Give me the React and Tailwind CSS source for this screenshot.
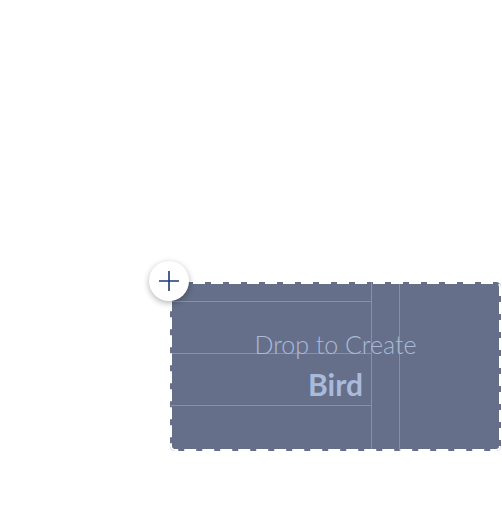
import React from 'react';

export default function App() {
  return (
    <div className="w-[502px] h-[512px] bg-white overflow-hidden" style={{ fontFamily: 'Lato, "Noto Sans", sans-serif' }}>
      <div className="pt-[282px] pl-[170px]">
        {/* drop target */}
        <div className="relative w-[331px] h-[169px] rounded-[5px] bg-[#656f89]">
          <div className="flex h-full">
            <div className="flex flex-col w-[201px]">
              <div className="h-[20px] border-b border-[#8590aa]" />
              <div className="h-[52px] border-b border-[#8590aa]" />
              <div className="h-[52px] border-b border-[#8590aa]" />
              <div className="flex-1" />
            </div>
            <div className="w-[29px] border-l border-r border-[#8590aa]" />
            <div className="flex-1" />
          </div>

          <svg className="absolute inset-0 pointer-events-none" width="331" height="169">
            <rect x="1" y="1" width="329" height="167" rx="4" fill="none" stroke="#ffffff" strokeWidth="2" strokeDasharray="12 6" />
          </svg>

          <div className="absolute inset-0 flex flex-col items-center pt-[47px] text-[#a9badb]">
            <div className="text-[25px] font-light leading-[30px]">Drop to Create</div>
            <div className="text-[30px] font-bold leading-[34px] mt-[8px]">Bird</div>
          </div>

          {/* add button */}
          <div className="absolute -left-[21px] -top-[21px] w-[40px] h-[40px] rounded-full bg-white shadow-[0_2px_6px_rgba(0,0,0,0.3)] flex items-center justify-center">
            <svg width="22" height="22" viewBox="0 0 22 22" fill="none" stroke="#1f3b70" strokeWidth="1.6">
              <path d="M11 1v20M1 11h20" />
            </svg>
          </div>
        </div>
      </div>
    </div>
  );
}
